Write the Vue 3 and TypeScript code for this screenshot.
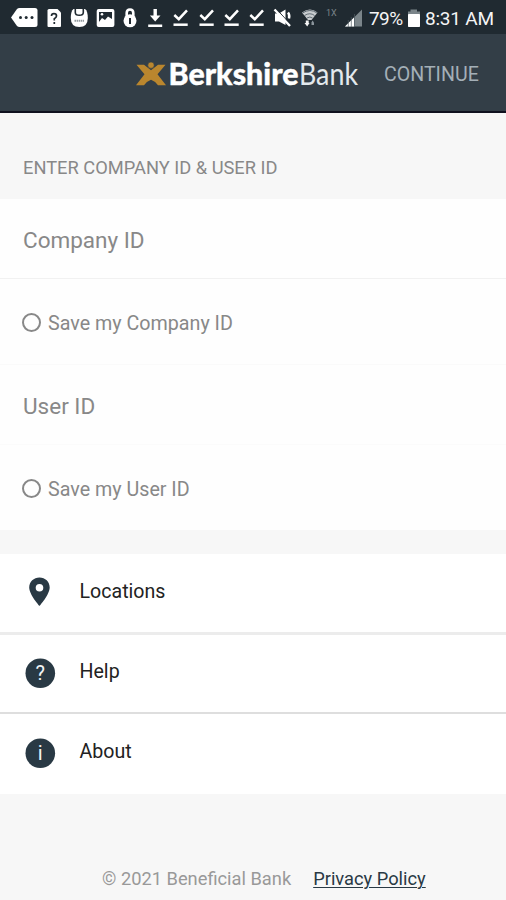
<script setup lang="ts">
import { ref } from 'vue'

type StatusIcon = 'doc' | 'face' | 'image' | 'lock' | 'download' | 'check' | 'mute'

const statusIcons: StatusIcon[] = [
  'doc', 'face', 'image', 'lock', 'download',
  'check', 'check', 'check', 'check', 'mute',
]

interface LoginField {
  label: string
  name: string
}

const fields: LoginField[] = [
  { label: 'Company ID', name: 'company' },
  { label: 'User ID', name: 'user' },
]

const saved = ref<Record<string, boolean>>({ company: false, user: false })

const links = [
  { label: 'Locations', icon: 'pin' },
  { label: 'Help', icon: 'help' },
  { label: 'About', icon: 'info' },
]
</script>

<template>
  <main class="screen">
    <div class="status">
      <svg class="status-message" viewBox="0 0 42 34">
        <path d="M11 17.500 17 9Q18 8 19.500 8H35Q37.500 8 37.500 10.500V24.500Q37.500 27 35 27H19.500Q18 27 17 26Z" fill="#fff" />
        <g fill="#202a31">
          <circle cx="20.500" cy="17.500" r="1.500" /><circle cx="26.200" cy="17.500" r="1.500" /><circle cx="32" cy="17.500" r="1.500" />
        </g>
      </svg>
      <svg v-for="(icon, i) in statusIcons" :key="i" class="status-icon" viewBox="0 0 25.3 34">
        <template v-if="icon === 'doc'">
          <path d="M7 9H15.500L19 12.500V26Q19 27 18 27H6.500Q5.500 27 5.500 26V10.500Q5.500 9 7 9Z" fill="#fff" />
          <path d="M9.500 16Q9.500 13.700 12 13.700T14.500 16Q14.500 17.500 12.300 18.700V20.500M12.300 22V24" fill="none" stroke="#202a31" stroke-width="1.700" />
        </template>
        <template v-else-if="icon === 'face'">
          <path d="M6.500 9H18Q20.800 11 20.800 18Q20.800 27 12.300 27T3.800 18Q3.800 11 6.500 9Z" fill="#fff" />
          <path d="M8.300 9V12.500Q8.300 15.300 12.300 15.300T16.300 12.500V9" fill="none" stroke="#202a31" stroke-width="1.600" />
          <path d="M7.500 20.800H17" stroke="#929a9e" stroke-width="2" stroke-dasharray="1.500 .6" />
        </template>
        <template v-else-if="icon === 'image'">
          <rect x="3.700" y="9" width="17.700" height="18" rx="2" fill="#fff" />
          <path d="M6 12H19V19L15 16.500 12 20 9 18 6 22Z" fill="#202a31" />
          <circle cx="9" cy="14.300" r="1.300" fill="#fff" />
        </template>
        <template v-else-if="icon === 'lock'">
          <path d="M8.700 17V13Q8.700 9.500 12 9.500T15.300 13V17" fill="none" stroke="#fff" stroke-width="2.600" />
          <circle cx="12" cy="20.800" r="6.500" fill="#fff" />
          <path d="M12 18V24" stroke="#202a31" stroke-width="2" />
        </template>
        <template v-else-if="icon === 'download'">
          <path d="M10.500 9H13.900V15.500H17.500L12.200 21.500 6.900 15.500H10.500ZM5.200 24.500H19.200V27H5.200Z" fill="#fff" />
        </template>
        <template v-else-if="icon === 'check'">
          <path d="M6.300 15 10.800 19.200 19 10.300" fill="none" stroke="#fff" stroke-width="2.500" />
          <path d="M5.500 24.700H19.700" stroke="#fff" stroke-width="2.500" />
        </template>
        <template v-else>
          <path d="M5 13.500H9L15.500 9.500V25L9 21.500H5Z" fill="#fff" />
          <path d="M6.500 9 21 25" stroke="#202a31" stroke-width="1" />
          <path d="M4.500 9.500 20 26M18 12.500Q20 15 19 18.500" fill="none" stroke="#fff" stroke-width="2.400" />
        </template>
      </svg>
      <svg class="status-wifi" viewBox="0 0 28 34">
        <path d="M7 12.500Q15 6.500 22.500 12.500L16.500 20H13Z" fill="#c8cccf" />
        <path d="M7.500 13Q15 8 22 13M9.500 15.500Q15 12 19.500 15.500M12 18Q15 16 17.500 18" fill="none" stroke="#536069" stroke-width=".9" />
        <path d="M10.800 20.500H13.700V23H14.500L12.200 26.500 9.500 23H10.800Z" fill="#f5f5f5" />
        <path d="M17.500 20.500 19 22.500V25H16.500V22.500Z" fill="#8b959c" />
      </svg>
      <span class="network">1X</span>
      <svg class="status-signal" viewBox="0 0 24 34">
        <path d="M4 26.500 21 9.500V26.500Z" fill="#7b858a" />
        <path d="M4 26.500 13 17.500V26.500Z" fill="#fff" />
        <path d="M7.300 20V27M10.300 17V27M13.500 14V27" stroke="#4d5960" stroke-width=".7" />
      </svg>
      <span class="battery-level">79%</span>
      <svg class="status-battery" viewBox="0 0 22 34">
        <path d="M7.500 9.500H14V11.500H17V15H5V11.500H7.500Z" fill="#7b858a" />
        <rect x="5" y="14" width="12" height="13" rx=".7" fill="#fff" />
      </svg>
      <span class="clock">8:31 AM</span>
    </div>

    <header class="header">
      <svg class="logo" viewBox="0 0 230 40" role="img" aria-label="Berkshire Bank">
        <path d="M6.500 9.800H14L21 15.300 28 9.800H35.500L27.500 19.200 36 30.300H28Q25 26 21 24.700 17 26 14 30.300H6L14.500 19.200Z" fill="#ba862e" />
        <circle cx="21" cy="10.200" r="3.200" fill="#ba862e" stroke="#333e47" stroke-width=".6" />
        <text class="logo-bold" x="38.500" y="30" textLength="130" lengthAdjust="spacingAndGlyphs">Berkshire</text>
        <text class="logo-light" x="169" y="30" textLength="59" lengthAdjust="spacingAndGlyphs">Bank</text>
      </svg>
      <button class="continue" type="button">CONTINUE</button>
    </header>

    <h1 class="title">ENTER COMPANY ID &amp; USER ID</h1>

    <form class="form">
      <div v-for="field in fields" :key="field.name" class="group">
        <input class="input" type="text" :name="field.name" :placeholder="field.label" />
        <label class="save">
          <input v-model="saved[field.name]" class="toggle" type="checkbox" />
          <span>Save my {{ field.label }}</span>
        </label>
      </div>
    </form>

    <nav class="links">
      <a v-for="link in links" :key="link.icon" class="link" :class="link.icon">
        <svg class="link-icon" viewBox="0 0 32 32">
          <path v-if="link.icon === 'pin'" fill-rule="evenodd" d="M15.500 1.500C9.800 1.500 5.200 5.800 5.200 11.500 5.200 18.500 15.500 30 15.500 30S25.700 18.500 25.700 11.500C25.700 5.800 21.200 1.500 15.500 1.500ZM15.500 8A3.800 3.800 0 1 1 15.500 15.600 3.800 3.800 0 0 1 15.500 8Z" fill="#293944" />
          <template v-else>
            <circle cx="16.300" cy="16.300" r="14.800" fill="#293944" />
            <text class="glyph" x="16.300" y="23.300" text-anchor="middle">{{ link.icon === 'help' ? '?' : 'i' }}</text>
          </template>
        </svg>
        <span>{{ link.label }}</span>
      </a>
    </nav>

    <footer class="footer">
      <span class="copyright">© 2021 Beneficial Bank</span>
      <a class="privacy">Privacy Policy</a>
    </footer>
  </main>
</template>

<style>
body {
  margin: 0;
  background: #f7f7f7;
}
</style>

<style scoped>
.screen {
  display: flex;
  flex-direction: column;
  box-sizing: border-box;
  width: 506px;
  height: 900px;
  overflow: hidden;
  background: #f7f7f7;
  font-family: Roboto, "Liberation Sans", sans-serif;
  color: #888;
}
.status {
  display: flex;
  align-items: center;
  flex: none;
  height: 34px;
  background: #202a31;
  color: #f5f5f5;
  white-space: nowrap;
}
.status svg {
  flex: none;
  height: 34px;
}
.status-message { width: 42px; }
.status-icon { width: 25.3px; }
.status-wifi { width: 28px; }
.network {
  width: 15px;
  padding: 0 0 9px 3px;
  font-size: 9px;
  color: #7b858a;
}
.status-signal { width: 24px; }
.battery-level {
  width: 34px;
  padding: 3px 0 0 4px;
  font-size: 19px;
  letter-spacing: -.6px;
}
.status-battery { width: 22px; }
.clock {
  padding-top: 3px;
  font-size: 19px;
  letter-spacing: -.2px;
}
.header {
  display: flex;
  align-items: center;
  box-sizing: border-box;
  flex: none;
  height: 79px;
  padding-left: 130px;
  border-bottom: 2px solid #10111f;
  background: #333e47;
}
.logo {
  width: 230px;
  height: 40px;
  margin-top: 5px;
  overflow: visible;
}
.logo-bold,
.logo-light {
  font-family: Lato, sans-serif;
  font-size: 30px;
  fill: #fff;
}
.logo-bold {
  font-weight: 900;
  stroke: #fff;
  stroke-width: .4px;
}
.logo-light {
  font-weight: 400;
  fill: #e3e9ed;
}
.continue {
  margin: 5px 0 0 24px;
  padding: 0;
  border: 0;
  background: none;
  font: 400 19.600px/24px Roboto, sans-serif;
  color: #a4afb7;
}
.title {
  box-sizing: border-box;
  flex: none;
  height: 86px;
  margin: 0;
  padding: 43px 23px 0;
  font-size: 18.300px;
  font-weight: 400;
  line-height: 24px;
}
.form {
  flex: none;
  background: #fefefe;
}
.group {
  box-sizing: border-box;
  height: 166px;
  border-bottom: 1px solid #fafafa;
}
.group:last-child {
  height: 165px;
  border-bottom: 0;
}
.input {
  display: block;
  box-sizing: border-box;
  width: 100%;
  height: 80px;
  padding: 2px 23px 0;
  border: 0;
  border-bottom: 1px solid #f1f1f1;
  outline: 0;
  background: none;
  font: 400 22.500px Roboto, sans-serif;
}
.group:last-child .input { border-color: #fbfbfb; }
.input::placeholder {
  color: #888;
  opacity: 1;
}
.save {
  display: flex;
  align-items: center;
  gap: 7px;
  height: 86px;
  padding-left: 22px;
  font-size: 19.700px;
}
.save span { padding-top: 3px; }
.toggle {
  appearance: none;
  box-sizing: border-box;
  width: 19px;
  height: 19px;
  margin: 0;
  border: 2px solid #888;
  border-radius: 50%;
}
.toggle:checked { background: #888; }
.links {
  flex: none;
  margin-top: 24px;
  background: #fff;
}
.link {
  display: flex;
  align-items: center;
  gap: 23.500px;
  box-sizing: border-box;
  height: 80px;
  padding: 0 0 3px 24px;
  font-size: 19.600px;
  color: #222;
}
.link.pin {
  height: 81px;
  border-bottom: 3px solid #ececec;
  padding-bottom: 2px;
}
.link.help {
  height: 79px;
  border-bottom: 2px solid #dedede;
  padding-bottom: 1px;
}
.link-icon {
  width: 32px;
  height: 32px;
}
.glyph {
  font-size: 20px;
  fill: #f0f3f5;
}
.link span { padding-bottom: 2px; }
.link.help span { padding-bottom: 3px; }
.footer {
  display: flex;
  gap: 22px;
  padding: 73px 0 0 102px;
  font-size: 18.300px;
  line-height: 24px;
  white-space: nowrap;
}
.copyright { color: #999; }
.privacy {
  color: #293944;
  text-decoration: underline;
  text-decoration-thickness: 1px;
  text-underline-offset: 2px;
}
</style>
